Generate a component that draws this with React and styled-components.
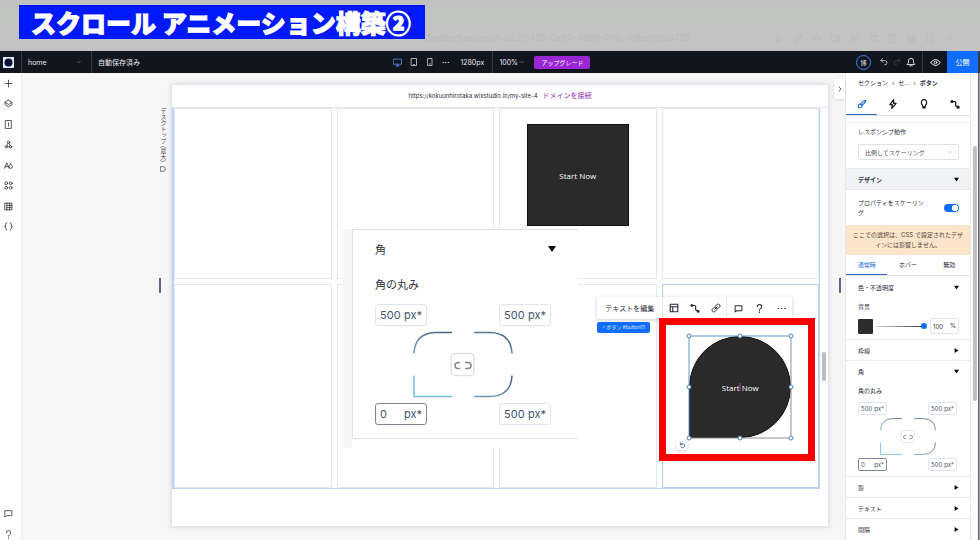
import React from 'react';
import styled, { createGlobalStyle, css } from 'styled-components';

const Global = createGlobalStyle`
  *, *::before, *::after { box-sizing: border-box; }
  body { margin: 0; background: #f6f6f7; overflow: hidden; }
  body, button, input, select { font-family: Inter, "Noto Sans CJK JP", sans-serif; font-size: 6px; color: #2b2e3a; }
  button, input, select { border: 0; margin: 0; padding: 0; background: none; }
  p, h1, h2, h3 { margin: 0; font-weight: 400; font-size: inherit; }
`;

const Page = styled.div`
  min-height: 100vh;
  display: grid;
  grid-template-rows: 51px 22px 1fr;
`;

/* Caption band over the browser chrome */
const Chrome = styled.header`
  background: linear-gradient(#c1c1c1 0 9px, #c2c4c1 9px 27px, #c3c3c3 27px);
  display: grid;
  grid-template-columns: auto 1fr auto;
  padding: 5px 7px 0 19px;
  align-items: start;
`;
const Caption = styled.h1`
  && { font: 900 25px/34px "Noto Sans CJK JP", sans-serif; }
  height: 34px;
  padding: 0 14px 0 12px;
  background: #0019fb;
  color: #fff;
  white-space: nowrap;
  -webkit-text-stroke: 1px #fff;
`;
const SessionUrl = styled.span`
  margin-top: 27px;
  padding-left: 2px;
  font-size: 9px;
  line-height: 12px;
  color: #bababa;
`;
const ChromeTools = styled.div`
  display: flex;
  gap: 10px;
  margin-top: 29px;
  color: #b5b5b8;
`;

/* Dark editor bar */
const Bar = styled.div`
  display: grid;
  grid-template-columns: 22px 70px 10fr auto 11fr 25px 31px 2px;
  background: #11151d;
  color: #e8eaee;
  font-size: 7px;
`;
const Logo = styled.a`
  display: flex;
  align-items: center;
  padding-left: 3px;
  border-right: 1px solid #343842;
`;
const PageSelect = styled.button`
  display: flex;
  align-items: center;
  justify-content: space-between;
  padding: 0 10px 0 6px;
  border-right: 1px solid #343842;
  color: inherit;
  font-size: 7px;
`;
const Saved = styled.div`
  display: flex;
  align-items: center;
  padding-left: 6px;
`;
const BarCenter = styled.div`
  display: flex;
  align-items: center;
`;
const Devices = styled.div`
  display: flex;
  align-items: center;
  gap: 8px;
  padding-right: 11px;
`;
const BarButton = styled.button`
  display: grid;
  place-items: center;
  color: ${p => p.$color || 'inherit'};
`;
const Width = styled.span`
  width: 32px;
`;
const Zoom = styled.button`
  display: flex;
  align-items: center;
  gap: 2px;
  align-self: stretch;
  width: 42px;
  border-left: 1px solid #343842;
  padding-left: 6px;
  color: inherit;
  font-size: 7px;
`;
const Upgrade = styled.button`
  width: 56px;
  height: 13px;
  border-radius: 2px;
  background: #9a27d5;
  color: #fff;
`;
const BarEnd = styled.div`
  display: flex;
  align-items: center;
  justify-content: flex-end;
  gap: 5px;
  padding-right: 6px;
`;
const Avatar = styled.button`
  width: 15px;
  height: 15px;
  margin-right: 4px;
  border: 1px solid #3b83f6;
  border-radius: 50%;
  color: #fff;
`;
const Preview = styled(BarButton)`
  border-left: 1px solid #343842;
`;
const Publish = styled.button`
  background: #116dff;
  color: #fff;
  font-size: 7px;
`;
const BarEdge = styled.span`
  background: #3a3c42;
`;

/* Editor body */
const Body = styled.div`
  display: grid;
  grid-template-columns: 22px 1fr 126px 9px;
  min-height: 0;
`;
const Rail = styled.nav`
  display: flex;
  flex-direction: column;
  align-items: center;
  gap: 8px;
  padding: 4px 4px 0 0;
  background: #fff;
  border-right: 1px solid #ececef;
`;
const RailGroup = styled.div`
  display: flex;
  flex-direction: column;
  justify-content: space-between;
  height: 156px;
  margin-bottom: auto;
`;
const RailButton = styled.button`
  display: grid;
  place-items: center;
  width: 13px;
  height: ${p => (p.$last ? '12px' : '13px')};
  color: #2d2f36;
`;
const Workspace = styled.main`
  display: grid;
  grid-template-columns: 150px 1fr 17px;
  padding: 12px 0 14px;
`;
const Side = styled.div`
  position: relative;
`;
const Breakpoint = styled.div`
  position: absolute;
  top: 23px;
  right: 4px;
  display: flex;
  align-items: center;
  gap: 4px;
  writing-mode: vertical-rl;
  line-height: 10px;
  color: #45464f;
  white-space: nowrap;
`;
const Grip = styled.span`
  position: absolute;
  top: 193px;
  ${p => p.$side}: 11px;
  width: 2px;
  height: 15px;
  background: #66638a;
`;
const Collapse = styled.button`
  position: absolute;
  top: -6px;
  right: 0;
  width: 11px;
  height: 20px;
  display: grid;
  place-items: center;
  background: #fff;
  border-radius: 3px 0 0 3px;
  box-shadow: 0 1px 3px #0002;
`;
const Stage = styled.section`
  position: relative;
  display: grid;
  grid-template-rows: 23px 1fr 37px;
  background: #fff;
  box-shadow: 0 0 5px #8a8da866;
`;
const Address = styled.div`
  display: flex;
  align-items: center;
  justify-content: center;
  gap: 5px;
  border-bottom: 1px solid #e3e4e9;
  line-height: 10px;
`;
const Connect = styled.a`
  color: #8b2cab;
  font-size: 7px;
  text-decoration: none;
`;
const Site = styled.div`
  display: grid;
  grid-template-columns: repeat(4, 1fr);
  grid-template-rows: 171px 1fr;
  gap: 5px;
  margin-right: 8px;
  border: solid #bdd3f3;
  border-width: 0 1px 1px 2px;
`;
const Cell = styled.div`
  border: 1px solid #dceafa;
  padding-top: ${p => p.$pad || '0'};
  border-color: ${p => (p.$active ? '#b5cff3' : '#e6e7ea #dceafa')};
`;
const Shape = styled.div`
  position: relative;
  width: 102px;
  margin: 0 auto;
`;
const StartButton = styled.button`
  && { font-family: "Open Sans", sans-serif; }
  display: block;
  width: 102px;
  height: 102px;
  background: #2a2a2a;
  border: 1px solid #111;
  color: #fff;
  font-size: 8px;
  border-radius: ${p => (p.$drop ? '51px 51px 51px 0' : '0')};
`;
const Highlight = styled.div`
  position: absolute;
  inset: -18px -24px -23px -30px;
  border: 7px solid #f80000;
`;
const Selection = styled.svg`
  position: absolute;
  inset: -3px;
  width: 108px;
  height: 108px;
`;
const Rotate = styled.button`
  position: absolute;
  left: -13px;
  bottom: -13px;
  width: 12px;
  height: 12px;
  display: grid;
  place-items: center;
  border-radius: 50%;
  background: #fff;
  box-shadow: 0 1px 3px #0003;
  color: #35598a;
`;
const Toolbar = styled.div`
  position: absolute;
  left: -92px;
  top: -39px;
  width: 195px;
  height: 22px;
  display: grid;
  grid-template-columns: 66px 64px 65px;
  background: #fff;
  border-radius: 2px;
  box-shadow: 0 1px 4px #0003;
`;
const ToolGroup = styled.div`
  display: flex;
  align-items: center;
  justify-content: space-around;
  border-right: 1px solid #e8e8ec;
  &:last-child { border: 0; }
`;
const EditText = styled.button`
  font-size: 7px;
  white-space: nowrap;
`;
const Tag = styled.div`
  position: absolute;
  left: -92px;
  top: -14px;
  width: 53px;
  height: 11px;
  border-radius: 2px;
  background: #116dff;
  color: #dceaff;
  font-size: 5px;
  line-height: 10px;
  text-align: center;
  white-space: nowrap;
`;
const PageScroll = styled.span`
  position: absolute;
  right: 2px;
  top: 267px;
  width: 4px;
  height: 29px;
  border-radius: 2px;
  background: #bdbdbf;
`;

/* Corner radius controls, in panel size and enlarged */
const Magnified = styled.section`
  position: absolute;
  left: 171px;
  top: 144px;
  width: 235px;
  height: 219px;
  padding-bottom: 9px;
  background: #fff;
  border-left: 9px solid #f5f5f6;
`;
const MagnifiedInner = styled.div`
  height: 210px;
  border: solid #e2e3e8;
  border-width: 1px 0 1px 1px;
  padding: 0 22px;
`;
const MagnifiedTitle = styled.h2`
  && { font-size: 11px; }
  display: flex;
  align-items: center;
  justify-content: space-between;
  height: 37px;
  color: #33343d;
`;
const MagnifiedLabel = styled.h3`
  && { font-size: 11px; }
  height: 37px;
  line-height: 37px;
  color: #33343d;
`;
const Corners = styled.div`
  display: grid;
  grid-template-columns: auto auto;
  justify-content: space-between;
  justify-items: center;
  padding-right: ${p => (p.$large ? '5px' : '0')};
`;
const Drawing = styled.div`
  grid-column: 1 / -1;
  padding: ${p => (p.$large ? '5px 0' : '3px 0')};
  svg { display: block; }
`;
const Field = styled.label`
  display: flex;
  align-items: center;
  justify-content: space-between;
  border: 1px solid ${p => (p.$focus ? '#81869c' : '#e0e4ee')};
  color: #3d566f;
  background: #fff;
  ${p => p.$large ? css`
    width: 52px; height: 22px; padding: 0 5px 0 4px; border-radius: 3px;
    &, input { font-size: 11px; }
    input { width: 24px; }
  ` : css`
    width: 29px; height: 13px; padding: 0 2px; border-radius: 2px;
    &, input { font-size: 6px; }
    input { width: 13px; }
  `}
  input { color: inherit; outline: 0; }
`;

/* Inspector */
const Inspector = styled.aside`
  background: #fff;
  border: solid #e6e7ea;
  border-width: 0 1px;
  line-height: 10px;
`;
const Crumbs = styled.nav`
  display: flex;
  gap: 4px;
  height: 20px;
  align-items: center;
  padding-left: 12px;
  a { color: inherit; text-decoration: none; }
  a:last-child { font-weight: 700; }
`;
const IconTabs = styled.div`
  display: grid;
  grid-template-columns: repeat(4, 1fr);
  height: 23px;
  border-bottom: 1px solid #e3e5ea;
`;
const TabButton = styled.button`
  display: grid;
  place-items: center;
  border-bottom: 1px solid ${p => (p.$on ? '#2b6cb9' : 'transparent')};
  color: ${p => (p.$on ? '#1c6ddb' : '#17181f')};
`;
const Behaviour = styled.label`
  display: block;
  margin-top: 6px;
  padding: 4px 11px 0 12px;
  height: 46px;
  border-top: 1px solid #eceef2;
`;
const Choice = styled.span`
  display: flex;
  align-items: center;
  margin-top: 7px;
  height: 16px;
  padding: 0 6px;
  border: 1px solid #e0e2e8;
  border-radius: 2px;
  select { flex: 1; appearance: none; outline: 0; color: #4c4f5c; }
`;
const SectionHead = styled.button`
  display: flex;
  width: 100%;
  align-items: center;
  justify-content: space-between;
  padding: 0 11px 0 12px;
  height: ${p => (p.$design ? '22px' : '21px')};
  border-top: 1px solid ${p => (p.$plain ? 'transparent' : '#e8eaee')};
  border-bottom: ${p => (p.$design ? '1px solid #e8eaee' : '0')};
  background: ${p => (p.$design ? '#f0f2f5' : 'none')};
  font-weight: ${p => (p.$design ? 700 : 400)};
`;
const ScaleRow = styled.label`
  display: flex;
  align-items: center;
  justify-content: space-between;
  height: 35px;
  padding: 0 11px 0 12px;
`;
const ScaleText = styled.span`
  width: 70px;
`;
const Switch = styled.input`
  && { appearance: none; }
  width: 15px;
  height: 8px;
  border-radius: 4px;
  background: radial-gradient(circle at 11px 4px, #fff 3px, #116dff 3px);
`;
const Note = styled.p`
  height: 30px;
  padding: 5px 5px;
  background: #fce4cb;
  text-align: center;
  color: #54463d;
`;
const StateTabs = styled(IconTabs)`
  grid-template-columns: repeat(3, 1fr);
  height: 21px;
`;
const Label = styled.h3`
  padding-left: 12px;
  height: ${p => (p.$tall ? '21px' : '20px')};
  line-height: 20px;
`;
const Fill = styled.div`
  display: flex;
  align-items: center;
  justify-content: space-between;
  height: 22px;
  padding: 0 11px 4px 12px;
`;
const Swatch = styled.button`
  width: 15px;
  height: 15px;
  border-radius: 1px;
  background: #2c2c2c;
`;
const Slider = styled.input`
  && { appearance: none; }
  width: 50px;
  height: 6px;
  background: linear-gradient(90deg, #ccc, #333) center / 100% 1px no-repeat;
  &::-webkit-slider-thumb { appearance: none; width: 6px; height: 6px; border-radius: 50%; background: #116dff; }
`;
const Percent = styled(Field)`
  height: 16px;
  color: #333640;
`;
const PanelCorners = styled.div`
  padding: 0 13px 5px 12px;
`;
const Scroll = styled.div`
  background: linear-gradient(90deg, #fbfbfb 0 7px, #66676d 7px 8px, #9b9ca0 8px);
  padding: 73px 3px 0 2px;
`;
const Thumb = styled.div`
  height: 255px;
  width: 4px;
  border-radius: 2px;
  background: #bfbfc0;
`;

const paths = {
  plus: <path d="M8 2v12M2 8h12" />,
  layers: <path d="M8 2l6 4-6 4-6-4zM2 6v4l6 4 6-4V6" />,
  page: <path d="M3 1h10v14H3zM8 5v6" />,
  nodes: <><circle cx="8" cy="4" r="2" /><circle cx="4" cy="12" r="2" /><circle cx="12" cy="12" r="2" /><path d="M7 6l-2 4M9 6l2 4M6 12h4" /></>,
  type: <><path d="M1 13L5 3l4 10M2 10h6" /><path d="M12 5c-1 2-3 3-3 5a3 3 0 0 0 6 0c0-2-2-3-3-5z" /></>,
  apps: <><circle cx="4" cy="4" r="2.500" /><circle cx="12" cy="4" r="2.500" /><circle cx="4" cy="12" r="2.500" /><circle cx="12" cy="12" r="2.500" /></>,
  table: <path d="M2 2h12v12H2zM5 2v12M10 2v12M5 6h9M5 10h9" />,
  braces: <path d="M5 1Q3 1 3 5T1 8Q3 8 3 11T5 15M11 1q2 0 2 4t2 3q-2 0-2 3t-2 4" />,
  chat: <path d="M2 3h12v9H5l-3 2z" />,
  help: <><path d="M4 5q0-4 4-4t4 4q0 2-2 3t-2 3" /><path d="M8 14v1" /></>,
  desktop: <path d="M1 2h14v9H1zM5 14h6M8 11v3" />,
  frame: <path d="M2 2h7q5 0 5 6t-5 6H2z" />,
  tablet: <path d="M3 1h10v14H3zM7 13h2" />,
  phone: <path d="M4 1h8v14H4zM7 12h2" />,
  dots: <path d="M2 8h1M8 8h1M14 8h1" />,
  down: <path d="M3 6l5 5 5-5" />,
  right: <path d="M5 2l6 6-6 6" />,
  undo: <path d="M5 1L2 5l4 4M2 5h7q5 0 5 5 0 4-5 4" />,
  redo: <path d="M11 1l3 4-4 4M14 5H7q-5 0-5 5 0 4 5 4" />,
  bell: <path d="M2 12h12l-2-3V6q0-4-4-4T4 6v3zM6 14h4" />,
  eye: <><path d="M1 8q7-9 14 0-7 9-14 0z" /><circle cx="8" cy="8" r="2" /></>,
  brush: <path d="M14 2Q10 2 6 8l2 2Q14 6 14 2zM5 8q-3 0-3 6 6 0 6-3z" />,
  bolt: <path d="M9 1L3 9h4l-1 6 7-8H9z" />,
  bulb: <path d="M6 12q0-2-2-4-1-7 4-7t4 7q-2 2-2 4zM6 14h4" />,
  path: <><path d="M4 4h3q3 0 2 4t3 4" /><circle cx="3" cy="4" r="1.500" fill="currentColor" /><circle cx="13" cy="13" r="1.500" fill="currentColor" /></>,
  layout: <path d="M2 2h12v12H2zM2 6h12M6 6v8" />,
  link: <path d="M7 5l3-3q2-1 4 1 1 2 0 3l-3 3q-2 1-3 0M9 11l-3 3q-2 1-4-1-1-2 0-3l3-3q2-1 3 0M6 10l4-4" />,
  rotate: <path d="M3 2v4h4M3 6q4-5 9-1 3 6-2 8-5 1-6-2" />,
  star: <path d="M8 2l2 4 4 1-3 3 1 4-4-2-4 2 1-4-3-3 4-1z" />,
  grid: <path d="M2 3h12v10H2zM8 8h6v5H8z" />,
  split: <path d="M2 2h12v12H2zM9 2v12" />,
};

function Icon({ name, size = 9, weight = 1.4 }) {
  return (
    <svg width={size} height={size} viewBox="0 0 16 16" fill="none" stroke="currentColor"
      strokeWidth={weight} strokeLinejoin="round" strokeLinecap="round" aria-hidden="true">
      {paths[name]}
    </svg>
  );
}

function Arrow({ open, size = 5 }) {
  return (
    <svg width={size} height={size} viewBox="0 0 8 8" aria-hidden="true">
      <path d={open ? 'M0 1h8L4 7z' : 'M1 0v8l6-4z'} fill="#090a0e" />
    </svg>
  );
}

function CornerDrawing({ width, height, id }) {
  return (
    <svg width={width} height={height} viewBox="0 0 100 66" fill="none" strokeWidth="1.500">
      <defs>
        <linearGradient id={id} x1="0" y1="1" x2="1" y2="0">
          <stop offset="0" stopColor="#6fa3c6" /><stop offset="1" stopColor="#465b74" />
        </linearGradient>
      </defs>
      <path d="M1 22Q2 2 22 1H39" stroke={`url(#${id})`} />
      <path d="M61 1h17q20 1 21 21" stroke={`url(#${id})`} />
      <path d="M61 65h17q20-1 21-21" stroke={`url(#${id})`} />
      <path d="M1 44v21h38" stroke="#72bbe3" />
      <rect x="38" y="22" width="23" height="22" rx="4" stroke="#e0e1e7" />
      <path d="M47 31h-2q-3 0-3 3t3 3h2M52 31h3q3 0 3 3t-3 3h-3" stroke="#85868f" />
    </svg>
  );
}

function Radius({ value, large, focus, label }) {
  return (
    <Field $large={large} $focus={focus}>
      <input aria-label={label} defaultValue={value} />px*
    </Field>
  );
}

function RadiusGrid({ large }) {
  return (
    <Corners $large={large}>
      <Radius large={large} value="500" label="左上" />
      <Radius large={large} value="500" label="右上" />
      <Drawing $large={large}>
        <CornerDrawing id={large ? 'edge-large' : 'edge'} width={large ? 100 : 56} height={large ? 67 : 37} />
      </Drawing>
      <Radius large={large} value="0" focus label="左下" />
      <Radius large={large} value="500" label="右下" />
    </Corners>
  );
}

function TopBar() {
  return (
    <Bar>
      <Logo href="#" aria-label="ホーム">
        <svg width="11" height="11" viewBox="0 0 11 11"><path d="M0 0h11v11H0z" fill="#dce9ff" /><circle cx="5.500" cy="5.500" r="4" fill="#0b1030" /></svg>
      </Logo>
      <PageSelect>home<Icon name="down" size={4} /></PageSelect>
      <Saved>自動保存済み</Saved>
      <BarCenter>
        <Devices>
          <BarButton $color="#5596ff" aria-label="デスクトップ"><Icon name="desktop" /></BarButton>
          <BarButton aria-label="タブレット"><Icon name="tablet" size={8} /></BarButton>
          <BarButton aria-label="モバイル"><Icon name="phone" size={8} /></BarButton>
          <BarButton aria-label="その他"><Icon name="dots" size={7} weight={2} /></BarButton>
        </Devices>
        <Width>1280px</Width>
        <Zoom>100%<Icon name="down" size={4} /></Zoom>
        <Upgrade>アップグレード</Upgrade>
      </BarCenter>
      <BarEnd>
        <Avatar>博</Avatar>
        <BarButton aria-label="元に戻す"><Icon name="undo" size={8} /></BarButton>
        <BarButton $color="#454952" aria-label="やり直す"><Icon name="redo" size={8} /></BarButton>
        <BarButton aria-label="通知"><Icon name="bell" size={10} /></BarButton>
      </BarEnd>
      <Preview aria-label="プレビュー"><Icon name="eye" size={11} /></Preview>
      <Publish>公開</Publish>
      <BarEdge />
    </Bar>
  );
}

const railIcons = [
  ['plus', '追加'], ['layers', 'レイヤー'], ['page', 'ページ'], ['nodes', 'サイト'],
  ['type', 'スタイル'], ['apps', 'アプリ'], ['table', 'CMS'], ['braces', 'コード'],
];

const browserIcons = ['star', 'brush', 'layers', 'grid', 'type', 'apps', 'page', 'table', 'split', 'plus', 'dots'];

function SelectedButton() {
  const handles = [[3, 3], [54, 3], [105, 3], [3, 54], [105, 54], [3, 105], [54, 105], [105, 105]];
  return (
    <Shape>
      <StartButton $drop>Start Now</StartButton>
      <Toolbar>
        <ToolGroup><EditText>テキストを編集</EditText></ToolGroup>
        <ToolGroup>
          <BarButton aria-label="レイアウト"><Icon name="layout" size={10} weight={1.8} /></BarButton>
          <BarButton aria-label="アニメーション"><Icon name="path" size={10} weight={1.8} /></BarButton>
          <BarButton aria-label="リンク"><Icon name="link" size={10} weight={1.6} /></BarButton>
        </ToolGroup>
        <ToolGroup>
          <BarButton aria-label="コメント"><Icon name="chat" weight={1.8} /></BarButton>
          <BarButton aria-label="ヘルプ"><Icon name="help" weight={1.8} /></BarButton>
          <BarButton aria-label="その他"><Icon name="dots" weight={2} /></BarButton>
        </ToolGroup>
      </Toolbar>
      <Tag>‹ ボタン #button11</Tag>
      <Highlight />
      <Selection viewBox="0 0 108 108" fill="none">
        <path d="M3 105V3h102" stroke="#5b9bd6" />
        <path d="M105 3v102H3" stroke="#8d8f94" />
        <path d="M54 50v8" stroke="#b23bc0" />
        {handles.map(([x, y]) => <circle key={`${x}-${y}`} cx={x} cy={y} r="2" fill="#fff" stroke="#4b84bd" />)}
      </Selection>
      <Rotate aria-label="回転"><Icon name="rotate" size={7} weight={1.8} /></Rotate>
    </Shape>
  );
}

function Canvas() {
  return (
    <Stage>
      <Address><span>https://kokuunhirotaka.wixstudio.io/my-site-4</span><Connect href="#">ドメインを接続</Connect></Address>
      <Site>
        <Cell /><Cell />
        <Cell $pad="15px"><Shape><StartButton>Start Now</StartButton></Shape></Cell>
        <Cell /><Cell /><Cell /><Cell />
        <Cell $active $pad="51px"><SelectedButton /></Cell>
      </Site>
      <Magnified>
        <MagnifiedInner>
          <MagnifiedTitle>角<Arrow open size={8} /></MagnifiedTitle>
          <MagnifiedLabel>角の丸み</MagnifiedLabel>
          <RadiusGrid large />
        </MagnifiedInner>
      </Magnified>
      <PageScroll />
    </Stage>
  );
}

function Panel() {
  return (
    <Inspector>
      <Crumbs><a href="#">セクション</a><span>›</span><a href="#">セ...</a><span>›</span><a href="#">ボタン</a></Crumbs>
      <IconTabs>
        <TabButton $on aria-label="デザイン"><Icon name="brush" size={10} weight={1.8} /></TabButton>
        <TabButton aria-label="インタラクション"><Icon name="bolt" size={10} weight={2} /></TabButton>
        <TabButton aria-label="ヒント"><Icon name="bulb" size={10} weight={2} /></TabButton>
        <TabButton aria-label="モーション"><Icon name="path" size={10} weight={2} /></TabButton>
      </IconTabs>
      <Behaviour>
        レスポンシブ動作
        <Choice><select><option>比例してスケーリング</option></select><Icon name="down" size={4} weight={1} /></Choice>
      </Behaviour>
      <SectionHead $design>デザイン<Arrow open /></SectionHead>
      <ScaleRow><ScaleText>プロパティをスケーリング</ScaleText><Switch type="checkbox" defaultChecked /></ScaleRow>
      <Note>ここでの選択は、CSS で設定されたデザインには影響しません。</Note>
      <StateTabs>
        <TabButton $on>通常時</TabButton><TabButton>ホバー</TabButton><TabButton>無効</TabButton>
      </StateTabs>
      <SectionHead $plain>色・不透明度<Arrow open /></SectionHead>
      <Label>背景</Label>
      <Fill>
        <Swatch aria-label="背景色" />
        <Slider type="range" defaultValue="100" aria-label="不透明度" />
        <Percent><input aria-label="不透明度の値" defaultValue="100" />%</Percent>
      </Fill>
      <SectionHead>枠線<Arrow /></SectionHead>
      <SectionHead>角<Arrow open /></SectionHead>
      <Label $tall>角の丸み</Label>
      <PanelCorners><RadiusGrid /></PanelCorners>
      <SectionHead>影<Arrow /></SectionHead>
      <SectionHead>テキスト<Arrow /></SectionHead>
      <SectionHead>間隔<Arrow /></SectionHead>
    </Inspector>
  );
}

export default function App() {
  return (
    <Page lang="ja">
      <Global />
      <Chrome>
        <Caption>スクロール アニメーション構築②</Caption>
        <SessionUrl>&amp;editorSessionId=e23f5405-0e60-4086-90fe-e9ba0fd3a733</SessionUrl>
        <ChromeTools>
          {browserIcons.map(n => <Icon key={n} name={n} weight={1} />)}
        </ChromeTools>
      </Chrome>
      <TopBar />
      <Body>
        <Rail>
          <RailGroup>
            {railIcons.map(([name, label]) => <RailButton key={name} aria-label={label}><Icon name={name} /></RailButton>)}
          </RailGroup>
          <RailButton aria-label="コメント"><Icon name="chat" /></RailButton>
          <RailButton $last aria-label="ヘルプ"><Icon name="help" /></RailButton>
        </Rail>
        <Workspace>
          <Side><Breakpoint>デスクトップ (最大)<Icon name="frame" size={6} weight={2} /></Breakpoint><Grip $side="right" /></Side>
          <Canvas />
          <Side><Collapse aria-label="閉じる"><Icon name="right" size={6} weight={2} /></Collapse><Grip $side="left" /></Side>
        </Workspace>
        <Panel />
        <Scroll><Thumb /></Scroll>
      </Body>
    </Page>
  );
}
